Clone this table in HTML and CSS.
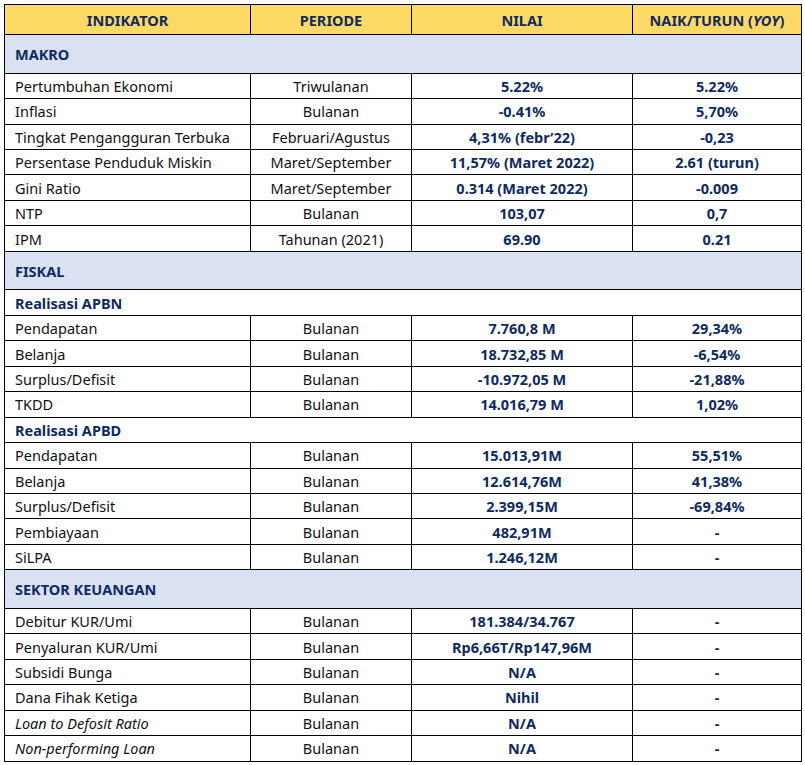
FILE: index.html
```html
<!DOCTYPE html>
<html lang="id">
<head>
<meta charset="utf-8">
<title>Indikator</title>
<link rel="stylesheet" href="styles.css">
</head>
<body>
<table class="tbl">
  <colgroup>
    <col class="c1"><col class="c2"><col class="c3"><col class="c4">
  </colgroup>
  <thead>
    <tr class="head">
      <th>INDIKATOR</th><th>PERIODE</th><th>NILAI</th><th>NAIK/TURUN (<i>YOY</i>)</th>
    </tr>
  </thead>
  <tbody>
    <tr class="sec"><td colspan="4">MAKRO</td></tr>
    <tr><td>Pertumbuhan Ekonomi</td><td>Triwulanan</td><td>5.22%</td><td>5.22%</td></tr>
    <tr><td>Inflasi</td><td>Bulanan</td><td>-0.41%</td><td>5,70%</td></tr>
    <tr><td>Tingkat Pengangguran Terbuka</td><td>Februari/Agustus</td><td>4,31% (febr’22)</td><td>-0,23</td></tr>
    <tr><td>Persentase Penduduk Miskin</td><td>Maret/September</td><td>11,57% (Maret 2022)</td><td>2.61 (turun)</td></tr>
    <tr><td>Gini Ratio</td><td>Maret/September</td><td>0.314 (Maret 2022)</td><td>-0.009</td></tr>
    <tr><td>NTP</td><td>Bulanan</td><td>103,07</td><td>0,7</td></tr>
    <tr><td>IPM</td><td>Tahunan (2021)</td><td>69.90</td><td>0.21</td></tr>
    <tr class="sec"><td colspan="4">FISKAL</td></tr>
    <tr class="sub"><td colspan="4">Realisasi APBN</td></tr>
    <tr><td>Pendapatan</td><td>Bulanan</td><td>7.760,8 M</td><td>29,34%</td></tr>
    <tr><td>Belanja</td><td>Bulanan</td><td>18.732,85 M</td><td>-6,54%</td></tr>
    <tr><td>Surplus/Defisit</td><td>Bulanan</td><td>-10.972,05 M</td><td>-21,88%</td></tr>
    <tr><td>TKDD</td><td>Bulanan</td><td>14.016,79 M</td><td>1,02%</td></tr>
    <tr class="sub"><td colspan="4">Realisasi APBD</td></tr>
    <tr><td>Pendapatan</td><td>Bulanan</td><td>15.013,91M</td><td>55,51%</td></tr>
    <tr><td>Belanja</td><td>Bulanan</td><td>12.614,76M</td><td>41,38%</td></tr>
    <tr><td>Surplus/Defisit</td><td>Bulanan</td><td>2.399,15M</td><td>-69,84%</td></tr>
    <tr><td>Pembiayaan</td><td>Bulanan</td><td>482,91M</td><td>-</td></tr>
    <tr><td>SiLPA</td><td>Bulanan</td><td>1.246,12M</td><td>-</td></tr>
    <tr class="sec"><td colspan="4">SEKTOR KEUANGAN</td></tr>
    <tr><td>Debitur KUR/Umi</td><td>Bulanan</td><td>181.384/34.767</td><td>-</td></tr>
    <tr><td>Penyaluran KUR/Umi</td><td>Bulanan</td><td>Rp6,66T/Rp147,96M</td><td>-</td></tr>
    <tr><td>Subsidi Bunga</td><td>Bulanan</td><td>N/A</td><td>-</td></tr>
    <tr><td>Dana Fihak Ketiga</td><td>Bulanan</td><td>Nihil</td><td>-</td></tr>
    <tr><td><i>Loan to Defosit Ratio</i></td><td>Bulanan</td><td>N/A</td><td>-</td></tr>
    <tr><td><i>Non-performing Loan</i></td><td>Bulanan</td><td>N/A</td><td>-</td></tr>
  </tbody>
</table>
</body>
</html>
```

FILE: styles.css
```css
html, body {
  margin: 0;
  padding: 0;
  background: #ffffff;
}
body {
  padding: 4px 0 0 4px;
  font-family: "Noto Sans", "Open Sans", "DejaVu Sans", sans-serif;
  font-size: 14.5px;
  color: #111111;
}
.tbl {
  border-collapse: collapse;
  table-layout: fixed;
  width: 797px;
}
.c1 { width: 246px; }
.c2 { width: 161px; }
.c3 { width: 221px; }
.c4 { width: 169px; }

.tbl th,
.tbl td {
  border: 1px solid #000000;
  padding: 0 4px;
  height: 24.45px;
  line-height: 18px;
  white-space: nowrap;
  overflow: hidden;
  text-align: center;
  vertical-align: middle;
}
.tbl td:first-child {
  text-align: left;
  padding-left: 10px;
}
.tbl td:nth-child(3),
.tbl td:nth-child(4) {
  font-weight: 700;
  color: #0f2a62;
}
.head th {
  background: #ffd966;
  color: #0f2a62;
  font-weight: 700;
  height: 29px;
}
.sec td {
  background: #d9e1f2;
  color: #0f2a62;
  font-weight: 700;
  height: 37.7px;
}
.sub td {
  color: #0f2a62;
  font-weight: 700;
}
```
